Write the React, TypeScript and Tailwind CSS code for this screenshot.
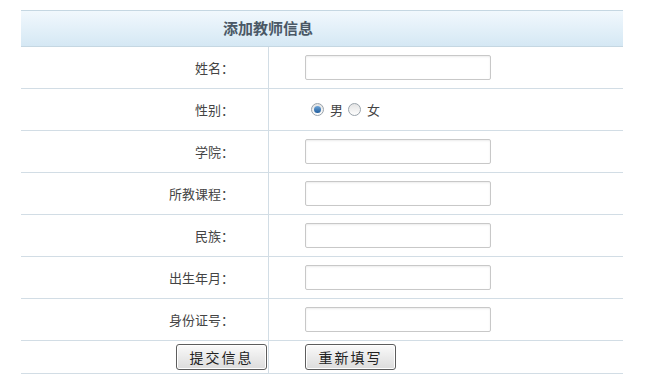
const fields = [
  { label: '姓名：', kind: 'text' },
  { label: '性别：', kind: 'radio' },
  { label: '学院：', kind: 'text' },
  { label: '所教课程：', kind: 'text' },
  { label: '民族：', kind: 'text' },
  { label: '出生年月：', kind: 'text' },
  { label: '身份证号：', kind: 'text' },
]

function Radio({ checked }: { checked?: boolean }) {
  return (
    <span className="inline-flex h-[13px] w-[13px] items-center justify-center rounded-full border border-[#9aa3ab] bg-gradient-to-b from-[#e4e4e4] to-[#fdfdfd]">
      {checked && <span className="h-[7px] w-[7px] rounded-full bg-gradient-to-b from-[#6fa6d8] to-[#1d5c9c]" />}
    </span>
  )
}

function Btn({ children }: { children: string }) {
  return (
    <button
      type="button"
      className="h-[26px] w-[91px] rounded-[3px] border border-[#5d5d5d] bg-gradient-to-b from-[#fafafa] to-[#dcdcdc] text-[14px] tracking-[2px] text-[#222] shadow-[inset_0_0_0_1px_#fff]"
    >
      {children}
    </button>
  )
}

export default function App() {
  return (
    <div className="min-h-screen bg-white pt-[10px] pl-[21px] font-['Noto_Sans_CJK_SC','Noto_Sans',sans-serif]">
      <div className="w-[602px]">
        {/* header */}
        <div className="flex h-[37px] items-center justify-center border-y border-[#c5d7e2] bg-gradient-to-b from-[#f1f8fd] to-[#d5e8f4] pr-[108px] text-[15px] font-bold text-[#4a5866]">
          添加教师信息
        </div>

        {fields.map((f) => (
          <div key={f.label} className="flex h-[42px] border-b border-[#d2dde5]">
            <div className="flex w-[248px] items-center justify-end border-r border-[#d2dde5] pr-[34px] text-[13px] text-[#444]">
              {f.label}
            </div>
            <div className="flex flex-1 items-center pl-[36px]">
              {f.kind === 'text' ? (
                <input
                  type="text"
                  className="h-[25px] w-[186px] rounded-[2px] border border-[#c8c8c8] bg-white shadow-[inset_0_1px_2px_rgba(0,0,0,0.08)] outline-none"
                />
              ) : (
                <div className="flex items-center pl-[6px] text-[13px] text-[#444]">
                  <Radio checked />
                  <span className="ml-[6px] mr-[5px]">男</span>
                  <Radio />
                  <span className="ml-[6px]">女</span>
                </div>
              )}
            </div>
          </div>
        ))}

        <div className="flex h-[33px] border-b border-[#d2dde5]">
          <div className="flex w-[248px] items-center justify-end border-r border-[#d2dde5] pr-[1px]">
            <Btn>提交信息</Btn>
          </div>
          <div className="flex flex-1 items-center pl-[36px]">
            <Btn>重新填写</Btn>
          </div>
        </div>
      </div>
    </div>
  )
}
